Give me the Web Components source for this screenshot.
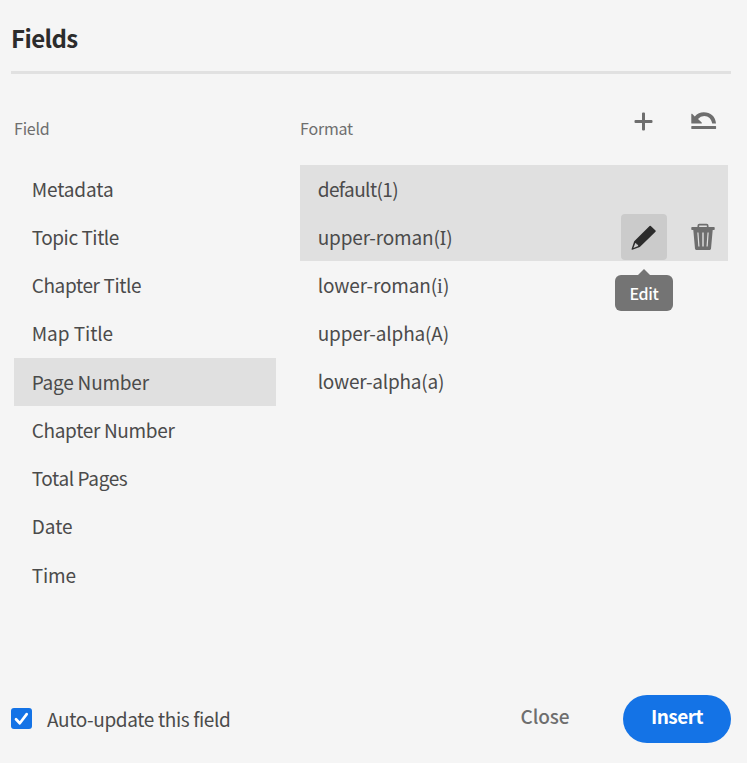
<!DOCTYPE html>
<html lang="en"><head><meta charset="utf-8"><title>Fields</title>
<style>
html,body{margin:0;height:100%}
body{background:#f5f5f5;color:#4b4b4b;font:19px/24px "Noto Sans CJK SC","Noto Sans",sans-serif;overflow:hidden}
.i{font-family:"Noto Sans",sans-serif;letter-spacing:0;line-height:0}
.j{font-family:"Liberation Serif",serif;font-size:21px;line-height:0;letter-spacing:0}
</style></head><body>
<fields-dialog>
  <span slot="title">Fields</span>
  <field-column slot="fields" label="Field" style="--pitch:48.25px">
    <list-row style="--ls:-.12px">Metadata</list-row>
    <list-row style="--ls:-.45px">Topic Title</list-row>
    <list-row style="--ls:-.38px">Chapter Title</list-row>
    <list-row style="--ls:-.05px">Map Title</list-row>
    <list-row selected style="--ls:-.22px">Page Number</list-row>
    <list-row style="--ls:-.32px">Chapter Number</list-row>
    <list-row style="--ls:-.38px">Total Pages</list-row>
    <list-row>Date</list-row>
    <list-row style="--ls:-.1px">Time</list-row>
  </field-column>
  <field-column slot="formats" label="Format" style="--pitch:48px">
    <ui-icon slot="tools" name="add"></ui-icon>
    <ui-icon slot="tools" name="revert"></ui-icon>
    <list-row selected style="--ls:-.58px">default(1)</list-row>
    <list-row selected style="--ls:-.17px">upper-roman(<span class="i">I</span>)
      <edit-button slot="actions"></edit-button><ui-icon slot="actions" name="trash"></ui-icon>
    </list-row>
    <list-row style="--ls:-.13px">lower-roman(<span class="j">i</span>)</list-row>
    <list-row style="--ls:-.16px">upper-alpha(A)</list-row>
    <list-row style="--ls:-.23px">lower-alpha(a)</list-row>
  </field-column>
  <check-box slot="footer">Auto-update this field</check-box>
  <pill-button slot="footer" style="--ls:-.1px">Close</pill-button>
  <pill-button slot="footer" primary style="--ls:-.5px">Insert</pill-button>
</fields-dialog>
<script>
const define=(name,html,setup)=>customElements.define(name,class extends HTMLElement{
  connectedCallback(){
    if(this.shadowRoot)return;
    const root=this.attachShadow({mode:'open'});
    root.innerHTML=html;
    if(setup)setup(this,root);
  }
});
const icons={
  add:[46,46,'<path fill="#6e6e6e" d="M21 14.500a1 1 0 0 1 1-1h1a1 1 0 0 1 1 1v6.500h6.500a1 1 0 0 1 1 1v1a1 1 0 0 1-1 1h-6.500v6.500a1 1 0 0 1-1 1h-1a1 1 0 0 1-1-1v-6.500h-6.500a1 1 0 0 1-1-1v-1a1 1 0 0 1 1-1h6.500z"/>'],
  revert:[46,46,'<path fill="#6e6e6e" d="M10.300 15.200a.5.5 0 0 1 .8-.4l2.700 2.600Q17.500 13.300 22.800 13.300C29.500 13.300 34.500 17.500 35 24.500h-3.800C30.500 20 27.500 17 23.200 17Q19.500 17 17 19.900l3.700 3.600q.7 1-.3 1h-9.500q-.6 0-.6-.6zM10.700 27h24q.4 0 .4.400v2.200q0 .4-.4.400h-24q-.4 0-.4-.4v-2.200q0-.4.400-.4z"/>'],
  trash:[46,46,'<path fill="none" stroke="#6e6e6e" stroke-width="1.700" d="M18.300 13.500v-1.700q0-1.100 1.100-1.100h7.200q1.100 0 1.100 1.100v1.700"/><path fill="#6e6e6e" fill-rule="evenodd" d="M12 13h22q.7 0 .7.7v1.600q0 .7-.7.7H12q-.7 0-.7-.7v-1.600q0-.7.7-.7zM13.300 16h19.400l-1.700 18.800q-.1 1.100-1.200 1.100H16.200q-1.100 0-1.200-1.100zM17.300 18.500l1 14h1.200L18.500 18.500zM22.300 18.500v14h1.400v-14zM27.500 18.500l-1 14h1.200L28.700 18.500z"/>'],
  edit:[46,46,'<path fill="#2c2c2c" fill-rule="evenodd" d="M28.600 12q.6-.6 1.200 0l4.700 4.500q.6.600 0 1.200L18.800 33 11.300 35.700q-1 .2-.7-.8L13.200 27.300zM14.300 28.900L12.400 33.900 17.300 32.100Q17.200 30.300 15.600 30.200 15.700 29 14.300 28.900z"/>']
};
define('ui-icon','<style>:host{display:block;width:46px;height:46px;flex:none}svg{display:block}</style><span></span>',(el,r)=>{
  const [w,h,p]=icons[el.getAttribute('name')];
  r.querySelector('span').innerHTML=`<svg width="${w}" height="${h}" viewBox="0 0 ${w} ${h}">${p}</svg>`;
});
define('edit-button',`<style>
  :host{display:block;position:relative;width:46px;height:46px;border-radius:4px;background:#cbcbcb}
  .tip{position:absolute;top:61px;left:-6px;width:58px;height:36px;border-radius:6px;background:#747474;color:#fff;font-size:16px;font-weight:500;line-height:37px;text-align:center;letter-spacing:-.4px}
  .tip::before{content:"";position:absolute;left:23px;top:-6px;border:6px solid transparent;border-top:0;border-bottom-color:#747474}
  </style><ui-icon name="edit"></ui-icon><div class="tip">Edit</div>`);
define('list-row',`<style>
  :host{display:flex;align-items:center;justify-content:space-between;height:var(--pitch);box-sizing:border-box;padding:0 2px 0 17.700px}
  :host([selected]){background:#e0e0e0}
  .t{letter-spacing:var(--ls,0);white-space:nowrap;padding-bottom:1px}
  .a{display:flex;gap:13px;letter-spacing:0}
  </style><div class="t"><slot></slot></div><div class="a"><slot name="actions"></slot></div>`);
define('field-column',`<style>
  :host{display:block}
  header{display:flex;height:91px;box-sizing:border-box;padding:25px 1px 0 0;justify-content:space-between}
  .l{color:#6e6e6e;font-size:16px;line-height:24px;padding-top:17px;letter-spacing:-.2px}
  .tools{display:flex;gap:14px}
  </style><header><div class="l"></div><div class="tools"><slot name="tools"></slot></div></header><slot></slot>`,(el,r)=>{
  r.querySelector('.l').textContent=el.getAttribute('label');
});
define('check-box',`<style>
  :host{display:flex;align-items:center;gap:15px;margin-right:auto;letter-spacing:-.36px}
  svg{display:block;margin-top:-1px}
  </style><svg width="21" height="21"><rect width="21" height="21" rx="3" fill="#1473e6"/><path d="M5 11.200L8.800 15.200 15.700 6.100" fill="none" stroke="#fff" stroke-width="2.700" stroke-linecap="round" stroke-linejoin="round"/></svg><span><slot></slot></span>`);
define('pill-button',`<style>
  :host{display:block;width:108px;height:48px;border-radius:24px;box-sizing:border-box;text-align:center;line-height:42px;color:#6e6e6e;font-weight:500;letter-spacing:var(--ls,0)}
  :host([primary]){background:#1473e6;color:#fff;font-weight:700}
  </style><slot></slot>`);
define('fields-dialog',`<style>
  :host{display:flex;flex-direction:column;height:763px;box-sizing:border-box;padding:0 16px 20px 11px}
  h1{margin:0;height:74px;box-sizing:border-box;border-bottom:3px solid #e1e1e1;font-size:24px;font-weight:700;line-height:76px;color:#2c2c2c;letter-spacing:-.6px}
  main{display:grid;grid-template-columns:262px 428px;gap:24px;padding-left:3px;flex:1}
  footer{display:flex;align-items:center;height:48px;gap:24px}
  </style><h1><slot name="title"></slot></h1><main><slot name="fields"></slot><slot name="formats"></slot></main><footer><slot name="footer"></slot></footer>`);
</script></body></html>
